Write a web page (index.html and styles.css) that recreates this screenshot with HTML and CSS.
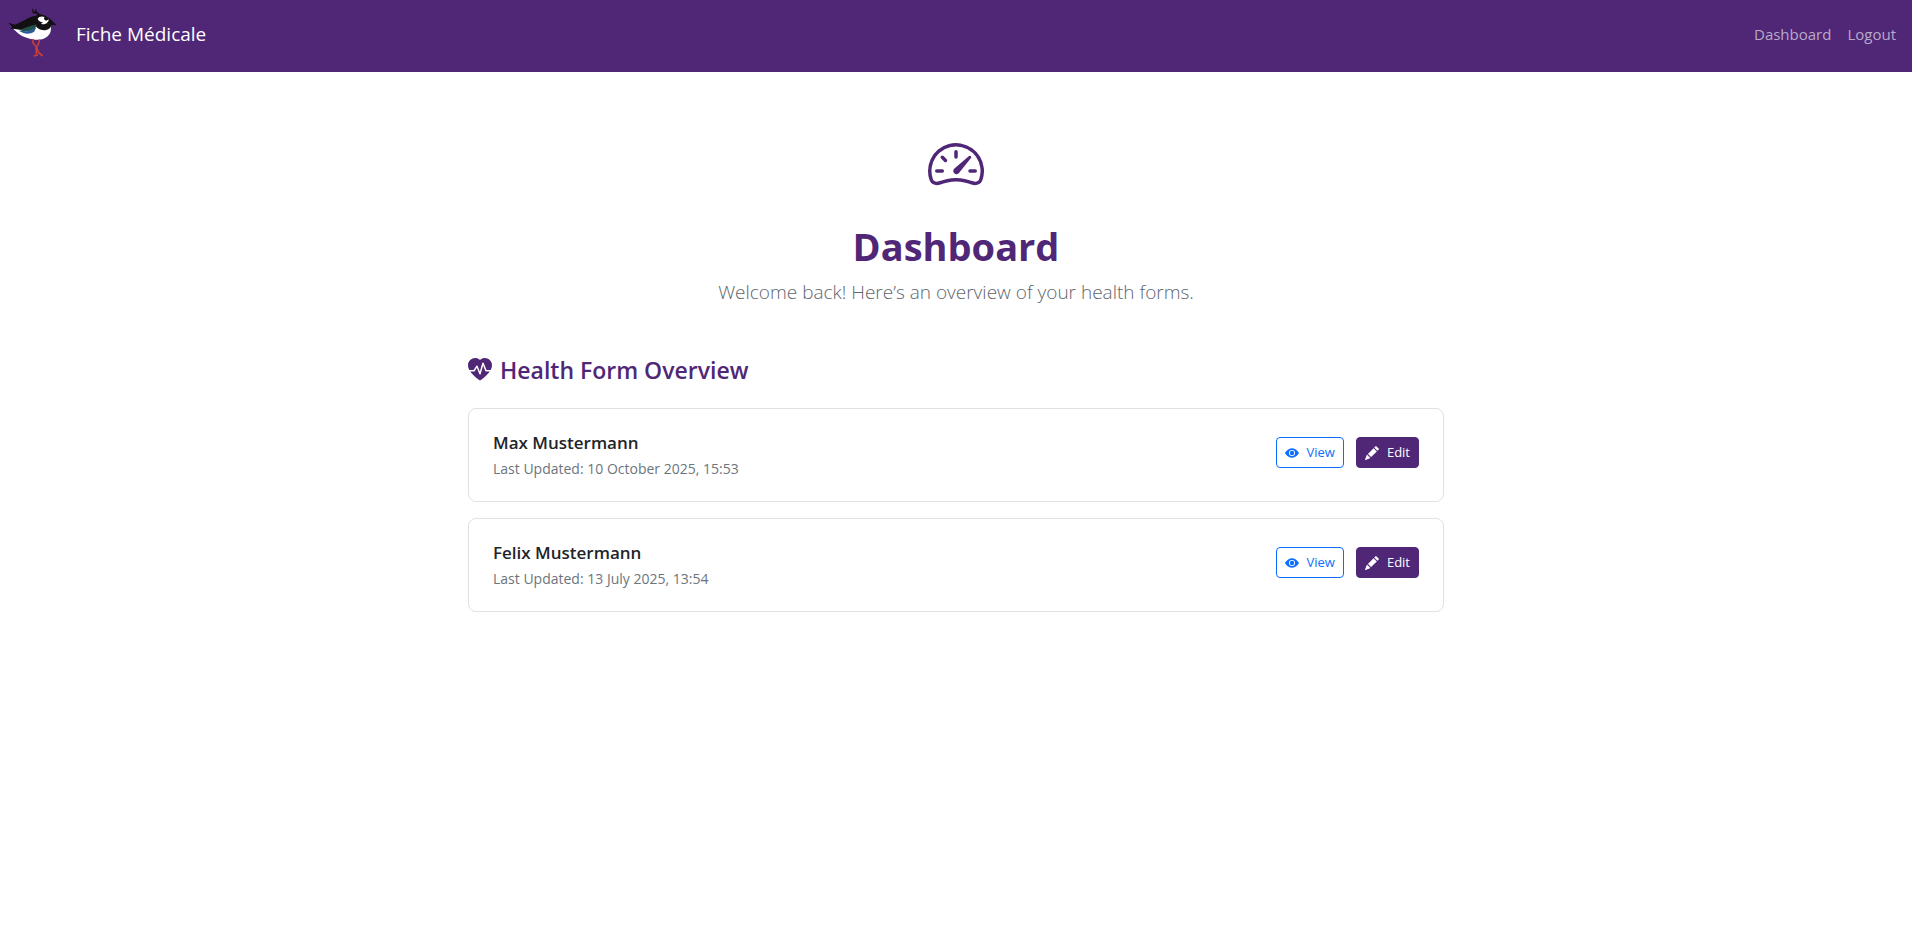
FILE: index.html
```html
<!DOCTYPE html>
<html lang="en">
<head>
  <meta charset="UTF-8" />
  <meta name="viewport" content="width=device-width, initial-scale=1.0" />
  <title>Dashboard</title>
  <link rel="stylesheet" href="styles.css">
</head>
<body>
  <!-- shared button icons -->
  <svg class="sprite" aria-hidden="true">
    <symbol id="eye" viewBox="0 0 16 16">
      <path d="M10.5 8a2.5 2.5 0 1 1-5 0 2.5 2.5 0 0 1 5 0"/>
      <path d="M0 8s3-5.500 8-5.500S16 8 16 8s-3 5.500-8 5.500S0 8 0 8m8 3.500a3.500 3.500 0 1 0 0-7 3.500 3.500 0 0 0 0 7"/>
    </symbol>
    <symbol id="pencil" viewBox="0 0 16 16">
      <path d="M12.854.146a.5.5 0 0 0-.707 0L10.500 1.793 14.207 5.500l1.647-1.646a.5.5 0 0 0 0-.708zm.646 6.061L9.793 2.500 3.293 9H3.500a.5.5 0 0 1 .5.5v.5h.5a.5.5 0 0 1 .5.5v.5h.5a.5.5 0 0 1 .5.5v.5h.5a.5.5 0 0 1 .5.5v.207zm-7.468 7.468A.5.5 0 0 1 6 13.500V13h-.5a.5.5 0 0 1-.5-.5V12h-.5a.5.5 0 0 1-.5-.5V11h-.5a.5.5 0 0 1-.5-.5V10h-.5a.5.5 0 0 1-.175-.032l-.179.178a.5.5 0 0 0-.11.168l-2 5a.5.5 0 0 0 .65.65l5-2a.5.5 0 0 0 .168-.11z"/>
    </symbol>
  </svg>

  <nav class="navbar">
    <a class="brand" href="#">
      <svg class="logo" viewBox="0 0 168 168" aria-hidden="true">
        <path fill="#fff" d="M14 67 L36 62 L84 50 L90 34 L98 28 L118 34 L128 58 Q132 80 119 91 Q104 104 80 101 Q48 97 30 82 Z"/>
        <path fill="#131013" d="M1 50 L22 56 L52 41 Q72 29 83 30 L89 25 L74 21 L71 5 L80 19 L83 7 L87 18 L96 24 Q114 27 126 38 Q132 42 135 47 L146 58 L130 57 Q128 70 112 73 Q96 74 86 64 L82 58 Q60 66 40 72 L14 68 L7 68 L12 62 Z"/>
        <path fill="#1f5148" d="M34 72 L60 62 L86 55 L82 68 Q66 76 46 76 Z"/>
        <path fill="#2c5a94" d="M32 74 L58 76 L84 66 L78 78 Q62 87 46 81 Z"/>
        <path fill="#fff" d="M89 38 Q94 29 110 33 Q104 40 115 44 L122 40 Q124 47 116 52 Q108 57 99 53 L105 49 Q92 48 89 38 Z"/>
        <path fill="none" stroke="#c63d39" stroke-width="5" d="M76 99 L74 109 L86 124 L92 140 L104 150 M94 101 L92 113 L84 126 L86 148 M77 150 L90 147"/>
      </svg>
      <span>Fiche Médicale</span>
    </a>
    <div class="nav-links">
      <a href="#">Dashboard</a>
      <a href="#">Logout</a>
    </div>
  </nav>

  <main class="container">
    <header class="hero">
      <svg class="hero-icon" viewBox="0 0 16 16" aria-hidden="true">
        <path d="M8 4a.5.5 0 0 1 .5.5V6a.5.5 0 0 1-1 0V4.500A.5.5 0 0 1 8 4M3.732 5.732a.5.5 0 0 1 .707 0l.915.914a.5.5 0 1 1-.708.708l-.914-.915a.5.5 0 0 1 0-.707M2 10a.5.5 0 0 1 .5-.5h1.586a.5.5 0 0 1 0 1H2.500A.5.5 0 0 1 2 10m9.500 0a.5.5 0 0 1 .5-.5h1.500a.5.5 0 0 1 0 1H12a.5.5 0 0 1-.5-.5m.754-4.246a.39.39 0 0 0-.527-.02L7.547 9.310a.91.91 0 1 0 1.302 1.258l3.434-4.297a.39.39 0 0 0-.029-.518z"/>
        <path fill-rule="evenodd" d="M0 10a8 8 0 1 1 15.547 2.661c-.442 1.253-1.845 1.602-2.932 1.250C11.309 13.488 9.475 13 8 13c-1.474 0-3.310.488-4.615.911-1.087.352-2.490.003-2.932-1.250A8 8 0 0 1 0 10m8-7a7 7 0 0 0-6.603 9.329c.203.575.923.876 1.680.63C4.397 12.533 6.358 12 8 12s3.604.532 4.923.96c.757.245 1.477-.056 1.680-.631A7 7 0 0 0 8 3"/>
      </svg>
      <h1>Dashboard</h1>
      <p>Welcome back! Here’s an overview of your health forms.</p>
    </header>

    <section>
      <h2 class="section-title">
        <svg class="title-icon" viewBox="0 0 16 16" aria-hidden="true">
          <path d="M1.475 9C2.702 10.840 4.779 12.871 8 15c3.221-2.129 5.298-4.160 6.525-6H12a.5.5 0 0 1-.464-.314l-1.457-3.642-1.598 5.593a.5.5 0 0 1-.945.049L5.889 6.568l-1.473 2.210A.5.5 0 0 1 4 9z"/>
          <path d="M.88 8C-2.427 1.680 4.410-2 7.823 1.143q.09.083.176.171a3 3 0 0 1 .176-.17C11.590-2 18.426 1.680 15.120 8h-2.783l-1.874-4.686a.5.5 0 0 0-.945.049L7.921 8.956 6.464 5.314a.5.5 0 0 0-.88-.091L3.732 8z"/>
        </svg>
        Health Form Overview
      </h2>

      <div class="cards">
        <article class="card">
          <div class="card-text">
            <h3>Max Mustermann</h3>
            <p>Last Updated: 10 October 2025, 15:53</p>
          </div>
          <div class="actions">
            <a class="btn btn-view" href="#"><svg aria-hidden="true"><use href="#eye"/></svg>View</a>
            <a class="btn btn-edit" href="#"><svg aria-hidden="true"><use href="#pencil"/></svg>Edit</a>
          </div>
        </article>
        <article class="card">
          <div class="card-text">
            <h3>Felix Mustermann</h3>
            <p>Last Updated: 13 July 2025, 13:54</p>
          </div>
          <div class="actions">
            <a class="btn btn-view" href="#"><svg aria-hidden="true"><use href="#eye"/></svg>View</a>
            <a class="btn btn-edit" href="#"><svg aria-hidden="true"><use href="#pencil"/></svg>Edit</a>
          </div>
        </article>
      </div>
    </section>
  </main>
</body>
</html>
```
FILE: styles.css
```css
* {
  box-sizing: border-box;
}
body {
  margin: 0;
  font-family: "Segoe UI", "Open Sans", "Noto Sans", sans-serif;
  font-size: 16px;
  line-height: 24px;
  color: #212529;
  background: #fff;
}
h1, h2, h3, p {
  margin: 0;
}
a {
  text-decoration: none;
}
svg {
  fill: currentColor;
  flex-shrink: 0;
}
.sprite {
  display: none;
}

/* navbar */
.navbar {
  display: flex;
  justify-content: space-between;
  align-items: center;
  padding: 6px 16px 10px 8px;
  background: #502776;
}
.brand {
  display: flex;
  align-items: center;
  gap: 12px;
  color: #fff;
  font-size: 19px;
}
.logo {
  width: 56px;
  height: 56px;
}
.nav-links {
  display: flex;
  gap: 16px;
}
.nav-links a {
  color: #b9a9c8;
  font-size: 15px;
}

/* content */
.container {
  max-width: 1000px;
  margin: 0 auto;
  padding: 64px 12px;
}
.hero {
  display: flex;
  flex-direction: column;
  align-items: center;
  text-align: center;
  margin-bottom: 50px;
}
.hero-icon {
  width: 56px;
  height: 56px;
  margin-bottom: 30px;
  color: #502776;
}
.hero h1 {
  margin-bottom: 8px;
  font-size: 38px;
  line-height: 48px;
  font-weight: 700;
  color: #502776;
}
.hero p {
  font-size: 19px;
  line-height: 28px;
  font-weight: 300;
  color: #5f666d;
}
.section-title {
  display: flex;
  align-items: center;
  gap: 8px;
  margin-bottom: 24px;
  font-size: 23px;
  line-height: 28px;
  font-weight: 600;
  color: #502776;
}
.title-icon {
  width: 24px;
  height: 24px;
}

/* form cards */
.cards {
  display: flex;
  flex-direction: column;
  gap: 16px;
}
.card {
  display: flex;
  justify-content: space-between;
  align-items: flex-start;
  padding: 20px 24px 22px;
  border: 1px solid #dee2e6;
  border-radius: 8px;
}
.card h3 {
  margin-bottom: 2px;
  font-size: 17px;
  line-height: 28px;
  font-weight: 600;
}
.card p {
  font-size: 14px;
  line-height: 20px;
  color: #6c757d;
}
.actions {
  display: flex;
  gap: 12px;
  padding-top: 8px;
}
.btn {
  display: flex;
  align-items: center;
  gap: 8px;
  padding: 4px 8px;
  border: 1px solid;
  border-radius: 4px;
  font-size: 13px;
  line-height: 21px;
}
.btn svg {
  width: 14px;
  height: 14px;
}
.btn-view {
  color: #0d6efd;
}
.btn-edit {
  color: #fff;
  background: #502776;
  border-color: #502776;
}
```
